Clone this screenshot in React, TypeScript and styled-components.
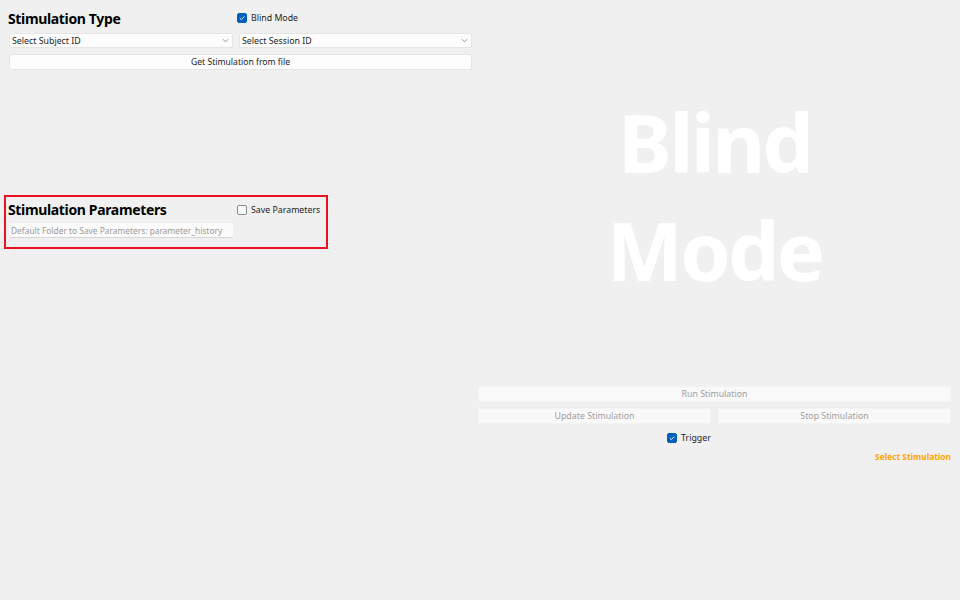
import React from "react";
import styled, { createGlobalStyle } from "styled-components";

const Global = createGlobalStyle`
  html, body { margin: 0; padding: 0; background: #f0f0f0; }
  body { font-family: "Noto Sans", "Open Sans", sans-serif; color: #1a1a1a; }
  * { box-sizing: border-box; }
`;

const Page = styled.div`
  width: 960px;
  height: 600px;
  display: flex;
  background: #f0f0f0;
  overflow: hidden;
`;

const LeftCol = styled.div`
  width: 478px;
  padding: 0 6px 0 9px;
  display: flex;
  flex-direction: column;
`;

const RightCol = styled.div`
  width: 482px;
  padding: 0 9px 0 0;
  display: flex;
  flex-direction: column;
  align-items: stretch;
`;

const Section = styled.div`
  display: flex;
  flex-direction: column;
`;

const HeaderRow = styled.div`
  display: flex;
  align-items: center;
  height: 29px;
  padding-top: 7px;
`;

const Title = styled.div`
  width: 229px;
  flex-shrink: 0;
  margin-left: -1px;
  font-size: 14px;
  font-weight: 700;
  letter-spacing: -0.35px;
  white-space: nowrap;
  color: #000;
`;

const CheckLabel = styled.label`
  display: flex;
  align-items: center;
  gap: 4px;
  font-size: 8.8px;
  white-space: nowrap;
  color: #1b1b1b;
`;

const Box = styled.span<{ $checked?: boolean }>`
  width: 10px;
  height: 10px;
  border-radius: 2px;
  display: inline-flex;
  align-items: center;
  justify-content: center;
  background: ${(p) => (p.$checked ? "#005fb8" : "#fdfdfd")};
  border: 1px solid ${(p) => (p.$checked ? "#005fb8" : "#8a8a8a")};
`;

const Check = ({ checked }: { checked?: boolean }) => (
  <Box $checked={checked}>
    {checked && (
      <svg width="8" height="8" viewBox="0 0 8 8">
        <path d="M1.8 4.2 L3.3 5.6 L6.3 2.4" stroke="#fff" strokeWidth="0.9" fill="none" />
      </svg>
    )}
  </Box>
);

const SelectRow = styled.div`
  display: flex;
  gap: 6px;
  margin-top: 4px;
`;

const Select = styled.div<{ $w: number }>`
  width: ${(p) => p.$w}px;
  height: 15px;
  background: #fdfdfd;
  border: 1px solid #e5e5e5;
  border-radius: 2px;
  display: flex;
  align-items: center;
  justify-content: space-between;
  padding: 0 3px 0 2px;
  font-size: 8.8px;
  color: #1b1b1b;
`;

const Chevron = () => (
  <svg width="7" height="5" viewBox="0 0 7 5">
    <path d="M0.8 1.2 L3.5 3.6 L6.2 1.2" stroke="#808080" strokeWidth="0.8" fill="none" />
  </svg>
);

const WideButton = styled.div`
  width: 463px;
  height: 16px;
  margin-top: 6px;
  background: #fdfdfd;
  border: 1px solid #e5e5e5;
  border-radius: 2px;
  display: flex;
  align-items: center;
  justify-content: center;
  font-size: 8.6px;
  color: #1b1b1b;
`;

const ParamsBox = styled.div`
  margin-top: 125px;
  margin-left: -5px;
  width: 324px;
  height: 54px;
  border: 2px solid #e81123;
  padding: 0 0 0 3px;
  display: flex;
  flex-direction: column;
`;

const ParamsHeader = styled.div`
  display: flex;
  align-items: center;
  height: 23px;
  padding-top: 2px;
`;

const Input = styled.div`
  width: 224px;
  height: 15px;
  margin-top: 3px;
  background: #fbfbfb;
  border-bottom: 1px solid #d6d6d6;
  border-radius: 2px;
  display: flex;
  align-items: center;
  padding-left: 2px;
  font-size: 8.4px;
  white-space: nowrap;
  color: #9a9a9a;
`;

const BigText = styled.div`
  height: 386px;
  display: flex;
  flex-direction: column;
  align-items: center;
  justify-content: flex-start;
  padding-top: 88px;
  font-size: 81px;
  font-weight: 700;
  letter-spacing: -2.6px;
  line-height: 108px;
  color: #ffffff;
  text-align: center;
  margin-left: 0px;
`;

const ActionButton = styled.div<{ $flex?: boolean }>`
  height: 16px;
  flex: ${(p) => (p.$flex ? 1 : "none")};
  background: #f9f9f9;
  border: 1px solid #f3f3f3;
  border-radius: 2px;
  display: flex;
  align-items: center;
  justify-content: center;
  font-size: 8.8px;
  color: #9d9d9d;
`;

const ButtonRow = styled.div`
  display: flex;
  gap: 7px;
  margin-top: 6px;
`;

const TriggerRow = styled.div`
  display: flex;
  justify-content: center;
  margin-top: 8px;
  padding-right: 51px;
`;

const SelectLink = styled.div`
  margin-top: 7px;
  text-align: right;
  font-size: 8.4px;
  font-weight: 700;
  color: #ffa500;
`;

export default function App() {
  return (
    <Page>
      <Global />
      <LeftCol>
        <Section>
          <HeaderRow>
            <Title>Stimulation Type</Title>
            <CheckLabel>
              <Check checked />
              Blind Mode
            </CheckLabel>
          </HeaderRow>
          <SelectRow>
            <Select $w={224}>
              <span>Select Subject ID</span>
              <Chevron />
            </Select>
            <Select $w={233}>
              <span>Select Session ID</span>
              <Chevron />
            </Select>
          </SelectRow>
          <WideButton>Get Stimulation from file</WideButton>
        </Section>
        <ParamsBox>
          <ParamsHeader>
            <Title>Stimulation Parameters</Title>
            <CheckLabel>
              <Check />
              Save Parameters
            </CheckLabel>
          </ParamsHeader>
          <Input>Default Folder to Save Parameters: parameter_history</Input>
        </ParamsBox>
      </LeftCol>
      <RightCol>
        <BigText>
          <span>Blind</span>
          <span>Mode</span>
        </BigText>
        <ActionButton>Run Stimulation</ActionButton>
        <ButtonRow>
          <ActionButton $flex>Update Stimulation</ActionButton>
          <ActionButton $flex>Stop Stimulation</ActionButton>
        </ButtonRow>
        <TriggerRow>
          <CheckLabel>
            <Check checked />
            Trigger
          </CheckLabel>
        </TriggerRow>
        <SelectLink>Select Stimulation</SelectLink>
      </RightCol>
    </Page>
  );
}
